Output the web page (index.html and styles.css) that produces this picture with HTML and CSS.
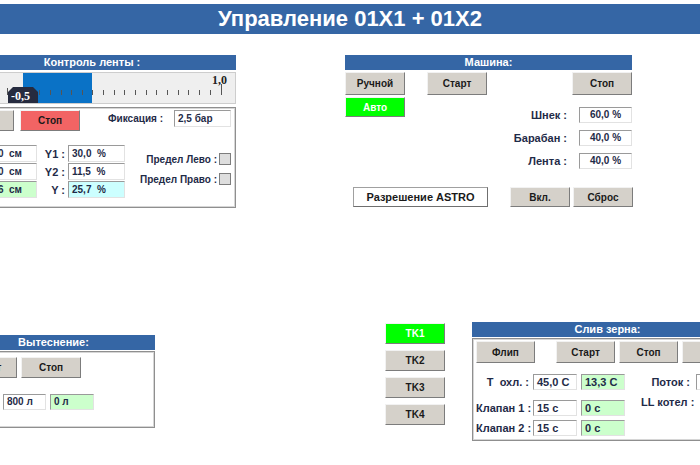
FILE: index.html
```html
<!DOCTYPE html>
<html lang="ru">
  <head>
    <meta charset="UTF-8" />
    <meta name="viewport" content="width=device-width, initial-scale=1.0" />
    <title>Управление 01X1 + 01X2</title>
    <link rel="stylesheet" href="styles.css">
  </head>
  <body>
    <div class="screen">
      <header class="title">Управление 01X1 + 01X2</header>

      <div class="row top-row">
        <!-- belt control -->
        <section class="panel belt">
          <div class="panel-head">Контроль ленты :</div>
          <svg class="gauge" width="288" height="32" viewBox="0 0 288 32">
            <rect x="0.5" y="0.5" width="287" height="31" fill="#efefef" stroke="#cdcdcd" />
            <rect x="75" y="1" width="69" height="30" fill="#0a72c6" />
            <g stroke="#555" stroke-width="1">
              <line x1="59.5" y1="16" x2="59.5" y2="23" />
              <line x1="70.5" y1="18" x2="70.5" y2="23" />
              <line x1="81.5" y1="18" x2="81.5" y2="23" />
              <line x1="91.5" y1="18" x2="91.5" y2="23" />
              <line x1="102.5" y1="18" x2="102.5" y2="23" />
              <line x1="113.5" y1="18" x2="113.5" y2="23" />
              <line x1="123.5" y1="18" x2="123.5" y2="23" />
              <line x1="134.5" y1="18" x2="134.5" y2="23" />
              <line x1="144.5" y1="18" x2="144.5" y2="23" />
              <line x1="155.5" y1="18" x2="155.5" y2="23" />
              <line x1="166.5" y1="18" x2="166.5" y2="23" />
              <line x1="176.5" y1="18" x2="176.5" y2="23" />
              <line x1="187.5" y1="18" x2="187.5" y2="23" />
              <line x1="198.5" y1="18" x2="198.5" y2="23" />
              <line x1="208.5" y1="18" x2="208.5" y2="23" />
              <line x1="219.5" y1="18" x2="219.5" y2="23" />
              <line x1="230.5" y1="18" x2="230.5" y2="23" />
              <line x1="240.5" y1="18" x2="240.5" y2="23" />
              <line x1="251.5" y1="18" x2="251.5" y2="23" />
              <line x1="262.5" y1="18" x2="262.5" y2="23" />
              <line x1="273.5" y1="12" x2="273.5" y2="23" />
            </g>
            <text class="gauge-max" x="264" y="12">1,0</text>
            <polygon points="60,20 65,15 85,15 90,20 90,31 60,31" fill="#262b3f" />
            <text class="gauge-val" x="63" y="28">-0,5</text>
          </svg>
          <div class="box belt-body">
            <div class="ctrl-row">
              <button class="btn">Старт</button>
              <button class="btn btn-red">Стоп</button>
              <span class="lbl fix-lbl">Фиксация :</span>
              <span class="field fix-field">2,5 бар</span>
            </div>
            <div class="data-row">
              <div class="col">
                <div class="pair"><span class="lbl x-lbl">X1 :</span><span class="field w57">10,0&nbsp; см</span></div>
                <div class="pair"><span class="lbl x-lbl">X2 :</span><span class="field w57">20,0&nbsp; см</span></div>
                <div class="pair"><span class="lbl x-lbl">X :</span><span class="field w57 green">12,6&nbsp; см</span></div>
              </div>
              <div class="col">
                <div class="pair"><span class="lbl y-lbl">Y1 :</span><span class="field w57">30,0&nbsp; %</span></div>
                <div class="pair"><span class="lbl y-lbl">Y2 :</span><span class="field w57">11,5&nbsp; %</span></div>
                <div class="pair"><span class="lbl y-lbl">Y :</span><span class="field w57 cyan">25,7&nbsp; %</span></div>
              </div>
              <div class="limits">
                <div class="limit"><span class="lbl">Предел Лево :</span><span class="check"></span></div>
                <div class="limit"><span class="lbl">Предел Право :</span><span class="check"></span></div>
              </div>
            </div>
          </div>
        </section>

        <!-- machine -->
        <section class="panel machine">
          <div class="panel-head">Машина:</div>
          <div class="mode-row">
            <button class="btn btn-tall">Ручной</button>
            <button class="btn btn-tall start">Старт</button>
            <button class="btn btn-tall push-right">Стоп</button>
          </div>
          <div class="machine-mid">
            <button class="btn btn-green">Авто</button>
            <div class="speeds">
              <div class="speed"><span class="lbl">Шнек :</span><span class="field center">60,0 %</span></div>
              <div class="speed"><span class="lbl">Барабан :</span><span class="field center">40,0 %</span></div>
              <div class="speed"><span class="lbl">Лента :</span><span class="field center">40,0 %</span></div>
            </div>
          </div>
          <div class="machine-foot">
            <button class="btn btn-white">Разрешение ASTRO</button>
            <button class="btn btn-foot">Вкл.</button>
            <button class="btn btn-foot">Сброс</button>
          </div>
        </section>
      </div>

      <div class="row bottom-row">
        <!-- displacement -->
        <section class="panel displace">
          <div class="panel-head">Вытеснение:</div>
          <div class="box displace-body">
            <div class="ctrl-row">
              <button class="btn">Старт</button>
              <button class="btn gap4">Стоп</button>
            </div>
            <div class="volume-row">
              <span class="lbl v-lbl">V :</span>
              <span class="field w43">800 л</span>
              <span class="field w44 green">0 л</span>
            </div>
          </div>
        </section>

        <!-- tanks -->
        <div class="tanks">
          <button class="btn btn-green">TK1</button>
          <button class="btn">TK2</button>
          <button class="btn">TK3</button>
          <button class="btn">TK4</button>
        </div>

        <!-- grain drain -->
        <section class="panel drain">
          <div class="panel-head">Слив зерна:</div>
          <div class="box drain-body">
            <div class="drain-btns">
              <button class="btn btn-drain">Флип</button>
              <button class="btn btn-drain start">Старт</button>
              <button class="btn btn-drain gap4">Стоп</button>
              <button class="btn btn-drain gap4">Вкл.</button>
            </div>
            <div class="drain-data">
              <div class="drain-grid">
                <span class="lbl">T&nbsp; охл. :</span>
                <span class="field">45,0 С</span>
                <span class="field green">13,3 С</span>
                <span class="lbl">Клапан 1 :</span>
                <span class="field">15 с</span>
                <span class="field green">0 с</span>
                <span class="lbl">Клапан 2 :</span>
                <span class="field">15 с</span>
                <span class="field green">0 с</span>
              </div>
              <div class="drain-side">
                <span class="lbl">Поток :</span>
                <span class="field">0 л/ч</span>
                <span class="lbl">LL котел :</span>
                <span class="check"></span>
              </div>
            </div>
          </div>
        </section>
      </div>
    </div>
  </body>
</html>
```

FILE: styles.css
```css
* {
  margin: 0;
  padding: 0;
  box-sizing: border-box;
}
body {
  background-color: #fff;
  color: #1f2b48;
  font-family: "Liberation Sans", Arial, sans-serif;
  font-weight: bold;
  font-size: 10px;
}
.screen {
  width: 700px;
  height: 465px;
  overflow: hidden;
}
.title {
  margin-top: 4px;
  height: 30px;
  line-height: 30px;
  background-color: #3566a5;
  color: #fff;
  font-size: 22px;
  text-align: center;
}
.row {
  display: flex;
  align-items: flex-start;
}
.row > * {
  flex-shrink: 0;
}
.top-row {
  margin-top: 21px;
  margin-left: -52px;
}
.bottom-row {
  margin-top: 114px;
  margin-left: -48px;
}
.panel-head {
  height: 15px;
  line-height: 15px;
  background-color: #3566a5;
  color: #fff;
  font-size: 11px;
  text-align: center;
}
.box {
  border: 1px solid #8f8f8f;
  box-shadow: inset 0 0 0 1px #d6d6d6;
}

/* buttons */
.btn {
  display: block;
  flex-shrink: 0;
  width: 60px;
  height: 21px;
  font-family: inherit;
  font-weight: bold;
  font-size: 10px;
  color: #1a1a1a;
  background-color: #d5d1ca;
  border: 1px solid;
  border-color: #f2f2f2 #7c7c7c #7c7c7c #f2f2f2;
}
.btn-red {
  background-color: #f26464;
  margin-left: 6px;
}
.btn-green {
  background-color: #00ff00;
  color: #fff;
}
.btn-white {
  width: 135px;
  height: 20px;
  background-color: #fff;
  font-size: 11px;
  border-color: #a0a0a0 #6f6f6f #6f6f6f #a0a0a0;
}
.gap4 {
  margin-left: 4px;
}

/* fields */
.lbl {
  display: block;
  white-space: nowrap;
}
.field {
  display: block;
  flex-shrink: 0;
  height: 17px;
  line-height: 15px;
  padding: 0 3px;
  background-color: #fff;
  color: #1f2b48;
  border: 1px solid;
  border-color: #9a9a9a #e2e2e2 #e2e2e2 #9a9a9a;
  white-space: nowrap;
  overflow: hidden;
}
.field.center {
  text-align: center;
}
.green {
  background-color: #ccffcc;
}
.cyan {
  background-color: #ccffff;
}
.check {
  display: block;
  width: 12px;
  height: 12px;
  background-color: #dedede;
  border: 1px solid #7d7d7d;
}

/* belt panel */
.belt {
  width: 288px;
}
.gauge {
  display: block;
  margin-top: 2px;
}
.gauge-max {
  font-family: "Liberation Serif", serif;
  font-weight: bold;
  font-size: 12px;
  fill: #222;
}
.gauge-val {
  font-family: "Liberation Serif", serif;
  font-weight: bold;
  font-size: 12px;
  fill: #fff;
}
.belt-body {
  margin-top: 3px;
  height: 101px;
  padding: 2px 4px 0 5px;
}
.ctrl-row {
  display: flex;
  align-items: flex-start;
}
.fix-lbl {
  margin-left: auto;
  line-height: 17px;
}
.fix-field {
  width: 57px;
  margin-left: 11px;
}
.data-row {
  display: flex;
  align-items: flex-start;
  margin-top: 14px;
}
.col {
  display: flex;
  flex-direction: column;
  gap: 1px;
}
.pair {
  display: flex;
  align-items: center;
}
.x-lbl {
  width: 23px;
  margin-right: 3px;
  text-align: right;
}
.y-lbl {
  width: 28px;
  margin-right: 3px;
  text-align: right;
  font-size: 11px;
}
.w57 {
  width: 57px;
}
.limits {
  margin-left: auto;
  padding-top: 8px;
  display: flex;
  flex-direction: column;
  gap: 8px;
}
.limit {
  display: flex;
  align-items: center;
  justify-content: flex-end;
  gap: 2px;
}

/* machine panel */
.machine {
  width: 287px;
  margin-left: 109px;
}
.mode-row {
  display: flex;
  margin-top: 2px;
}
.btn-tall {
  height: 23px;
}
.start {
  margin-left: 22px;
}
.push-right {
  margin-left: auto;
}
.machine-mid {
  display: flex;
  align-items: flex-start;
  margin-top: 2px;
}
.machine-mid .btn-green {
  height: 20px;
}
.speeds {
  margin-left: auto;
  margin-top: 10px;
  display: flex;
  flex-direction: column;
  gap: 7px;
}
.speed {
  display: flex;
  align-items: center;
  justify-content: flex-end;
  font-size: 11px;
}
.speed .field {
  width: 53px;
  height: 16px;
  line-height: 14px;
  margin-left: 12px;
  font-size: 10px;
}
.machine-foot {
  display: flex;
  margin-top: 18px;
  padding-left: 8px;
}
.btn-foot {
  height: 20px;
  margin-left: 3px;
}
.btn-white + .btn-foot {
  margin-left: 22px;
}

/* displacement panel */
.displace {
  width: 203px;
  margin-top: 13px;
}
.displace-body {
  margin-top: 1px;
  height: 77px;
  padding: 5px 4px 0 4px;
}
.volume-row {
  display: flex;
  margin-top: 16px;
}
.v-lbl {
  width: 43px;
  margin-right: 3px;
  text-align: right;
  line-height: 16px;
}
.volume-row .field {
  height: 16px;
  line-height: 14px;
}
.w43 {
  width: 43px;
}
.w44 {
  width: 44px;
  margin-left: 4px;
}

/* tank selector */
.tanks {
  margin-left: 230px;
  margin-top: 1px;
  display: flex;
  flex-direction: column;
  gap: 6px;
}

/* grain drain panel */
.drain {
  width: 271px;
  margin-left: 27px;
}
.drain-body {
  margin-top: 1px;
  height: 103px;
  padding: 2px 3px 0 3px;
}
.drain-btns {
  display: flex;
}
.btn-drain {
  width: 59px;
  height: 22px;
}
.btn-drain.start {
  margin-left: 21px;
}
.drain-data {
  display: flex;
  align-items: flex-start;
  margin-top: 11px;
  font-size: 11px;
}
.drain-grid {
  display: grid;
  grid-template-columns: 53px 44px 44px;
  grid-template-rows: 26px 20px 16px;
  column-gap: 4px;
  align-items: start;
}
.drain-grid .lbl,
.drain-side .lbl {
  text-align: right;
  line-height: 16px;
}
.drain-grid .field,
.drain-side .field {
  height: 16px;
  line-height: 14px;
}
.drain-side {
  margin-left: 16px;
  display: grid;
  grid-template-columns: 49px 44px;
  grid-template-rows: 20px 16px;
  column-gap: 6px;
  align-items: start;
}
.drain-side .check {
  visibility: hidden;
}
```
